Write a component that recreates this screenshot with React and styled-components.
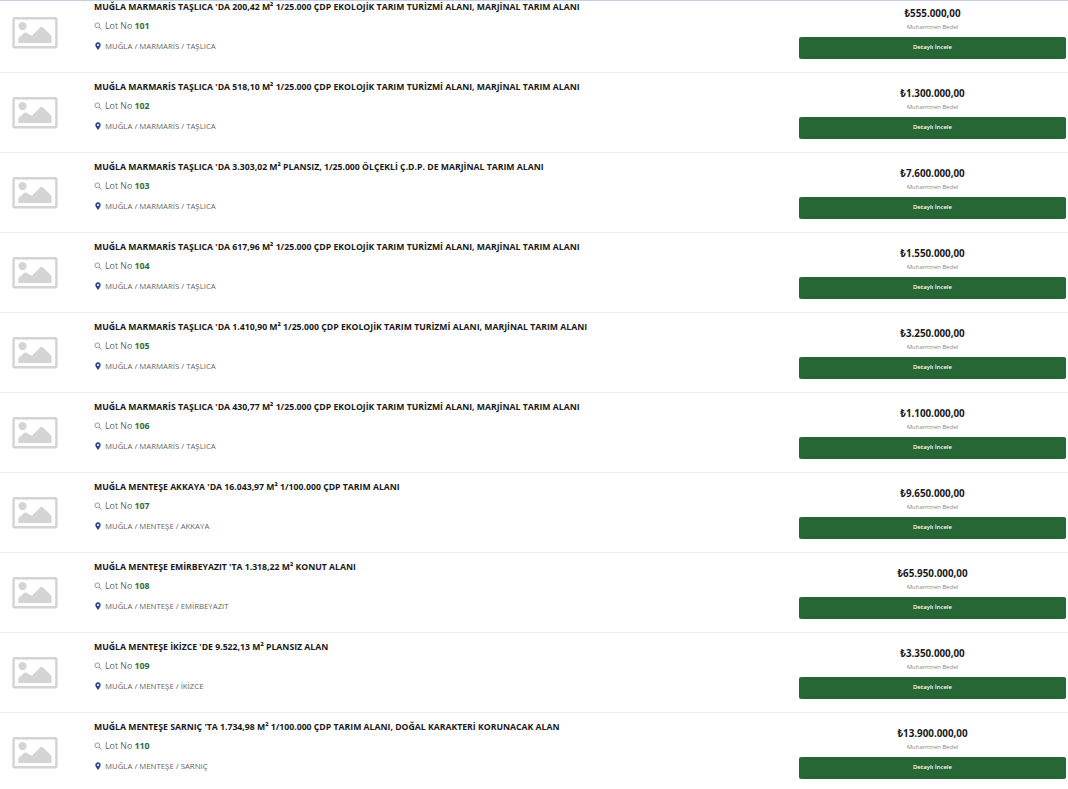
import styled, { createGlobalStyle } from 'styled-components';

const lots = [
    { no: 101, title: "MUĞLA MARMARİS TAŞLICA 'DA 200,42 M² 1/25.000 ÇDP EKOLOJİK TARIM TURİZMİ ALANI, MARJİNAL TARIM ALANI", place: 'MUĞLA / MARMARİS / TAŞLICA', price: '₺555.000,00' },
    { no: 102, title: "MUĞLA MARMARİS TAŞLICA 'DA 518,10 M² 1/25.000 ÇDP EKOLOJİK TARIM TURİZMİ ALANI, MARJİNAL TARIM ALANI", place: 'MUĞLA / MARMARİS / TAŞLICA', price: '₺1.300.000,00' },
    { no: 103, title: "MUĞLA MARMARİS TAŞLICA 'DA 3.303,02 M² PLANSIZ, 1/25.000 ÖLÇEKLİ Ç.D.P. DE MARJİNAL TARIM ALANI", place: 'MUĞLA / MARMARİS / TAŞLICA', price: '₺7.600.000,00' },
    { no: 104, title: "MUĞLA MARMARİS TAŞLICA 'DA 617,96 M² 1/25.000 ÇDP EKOLOJİK TARIM TURİZMİ ALANI, MARJİNAL TARIM ALANI", place: 'MUĞLA / MARMARİS / TAŞLICA', price: '₺1.550.000,00' },
    { no: 105, title: "MUĞLA MARMARİS TAŞLICA 'DA 1.410,90 M² 1/25.000 ÇDP EKOLOJİK TARIM TURİZMİ ALANI, MARJİNAL TARIM ALANI", place: 'MUĞLA / MARMARİS / TAŞLICA', price: '₺3.250.000,00' },
    { no: 106, title: "MUĞLA MARMARİS TAŞLICA 'DA 430,77 M² 1/25.000 ÇDP EKOLOJİK TARIM TURİZMİ ALANI, MARJİNAL TARIM ALANI", place: 'MUĞLA / MARMARİS / TAŞLICA', price: '₺1.100.000,00' },
    { no: 107, title: "MUĞLA MENTEŞE AKKAYA 'DA 16.043,97 M² 1/100.000 ÇDP TARIM ALANI", place: 'MUĞLA / MENTEŞE / AKKAYA', price: '₺9.650.000,00' },
    { no: 108, title: "MUĞLA MENTEŞE EMİRBEYAZIT 'TA 1.318,22 M² KONUT ALANI", place: 'MUĞLA / MENTEŞE / EMİRBEYAZIT', price: '₺65.950.000,00' },
    { no: 109, title: "MUĞLA MENTEŞE İKİZCE 'DE 9.522,13 M² PLANSIZ ALAN", place: 'MUĞLA / MENTEŞE / İKİZCE', price: '₺3.350.000,00' },
    { no: 110, title: "MUĞLA MENTEŞE SARNIÇ 'TA 1.734,98 M² 1/100.000 ÇDP TARIM ALANI, DOĞAL KARAKTERİ KORUNACAK ALAN", place: 'MUĞLA / MENTEŞE / SARNIÇ', price: '₺13.900.000,00' },
];

const Placeholder = () => (
    <Thumb viewBox="0 0 46 32">
        <rect x="1.25" y="1.25" width="43.5" height="29.5" rx="1" fill="none" stroke="#d4d4d4" strokeWidth="2.5" />
        <circle cx="10.3" cy="9.2" r="4.2" fill="#d4d4d4" />
        <path d="M6 26.5 V21.5 L13 15.5 L19.7 19 L29.7 9.5 L39.8 19 V26.5 Z" fill="#d4d4d4" />
    </Thumb>
);

const SearchIcon = () => (
    <IconSvg viewBox="0 0 10 10">
        <circle cx="4.2" cy="4.2" r="3" fill="none" stroke="#777" strokeWidth="0.9" />
        <path d="M6.4 6.4 L9.2 9.2" stroke="#777" strokeWidth="1.1" />
    </IconSvg>
);

const PinIcon = () => (
    <IconSvg viewBox="0 0 10 10">
        <path fillRule="evenodd" d="M5 0.3 C2.8 0.3 1.6 1.9 1.6 3.6 C1.6 5.8 5 9.8 5 9.8 C5 9.8 8.4 5.8 8.4 3.6 C8.4 1.9 7.2 0.3 5 0.3 Z M5 2.4 A1.3 1.3 0 1 1 5 5 A1.3 1.3 0 1 1 5 2.4 Z" fill="#2f4a8c" />
    </IconSvg>
);

const App = () => {
    return (
        <Page>
            <GlobalStyle />
            <TopLine />
            <List>
                {lots.map((lot) => (
                    <Row key={lot.no}>
                        <ThumbCell>
                            <Placeholder />
                        </ThumbCell>
                        <Info>
                            <Title>{lot.title}</Title>
                            <LotLine>
                                <SearchIcon />
                                <span>Lot No <LotNo>{lot.no}</LotNo></span>
                            </LotLine>
                            <Place>
                                <PinIcon />
                                <span>{lot.place}</span>
                            </Place>
                        </Info>
                        <PriceBox>
                            <Price>{lot.price}</Price>
                            <PriceLabel>Muhammen Bedel</PriceLabel>
                            <DetailButton>Detaylı İncele</DetailButton>
                        </PriceBox>
                    </Row>
                ))}
            </List>
        </Page>
    )
}

export default App

const GlobalStyle = createGlobalStyle`
  html, body {
    margin: 0;
    padding: 0;
    background: #fff;
    font-family: "Open Sans", "Noto Sans", sans-serif;
  }
`

const Page = styled.div`
  width: 1068px;
  height: 789px;
  overflow: hidden;
`

const TopLine = styled.div`
  height: 1px;
  background: #c3cfe6;
`

const List = styled.div`
  margin-top: -8px;
`

const Row = styled.div`
  box-sizing: border-box;
  height: 80px;
  display: grid;
  grid-template-columns: 94px 1fr 267px;
  padding-right: 2px;
  border-bottom: 1px solid #ececec;
`

const ThumbCell = styled.div`
  padding: 24px 0 0 12px;
`

const Thumb = styled.svg`
  display: block;
  width: 46px;
  height: 31.5px;
`

const Info = styled.div`
  padding-top: 7px;
  display: flex;
  flex-direction: column;
`

const Title = styled.div`
  font-size: 8.7px;
  line-height: 14px;
  font-weight: 700;
  color: #1a1a1a;
  white-space: nowrap;
`

const LotLine = styled.div`
  margin-top: 5px;
  display: flex;
  align-items: center;
  gap: 3px;
  font-size: 8.8px;
  line-height: 14px;
  color: #666;
`

const LotNo = styled.b`
  color: #2f6b3c;
`

const Place = styled.div`
  margin-top: 6px;
  display: flex;
  align-items: center;
  gap: 3px;
  font-size: 7.8px;
  line-height: 14px;
  color: #666;
`

const IconSvg = styled.svg`
  display: block;
  width: 8px;
  height: 8px;
  flex: none;
`

const PriceBox = styled.div`
  padding-top: 14px;
  display: flex;
  flex-direction: column;
  align-items: center;
`

const Price = styled.div`
  font-size: 9.8px;
  line-height: 14px;
  font-weight: 700;
  color: #1a1a1a;
`

const PriceLabel = styled.div`
  font-size: 6px;
  line-height: 10px;
  margin-top: 1px;
  color: #888;
`

const DetailButton = styled.button`
  width: 100%;
  height: 22px;
  margin-top: 5px;
  padding: 0 0 2px;
  border: none;
  border-radius: 2px;
  background: #276635;
  color: #fff;
  font-family: inherit;
  font-size: 6px;
  font-weight: 600;
`
